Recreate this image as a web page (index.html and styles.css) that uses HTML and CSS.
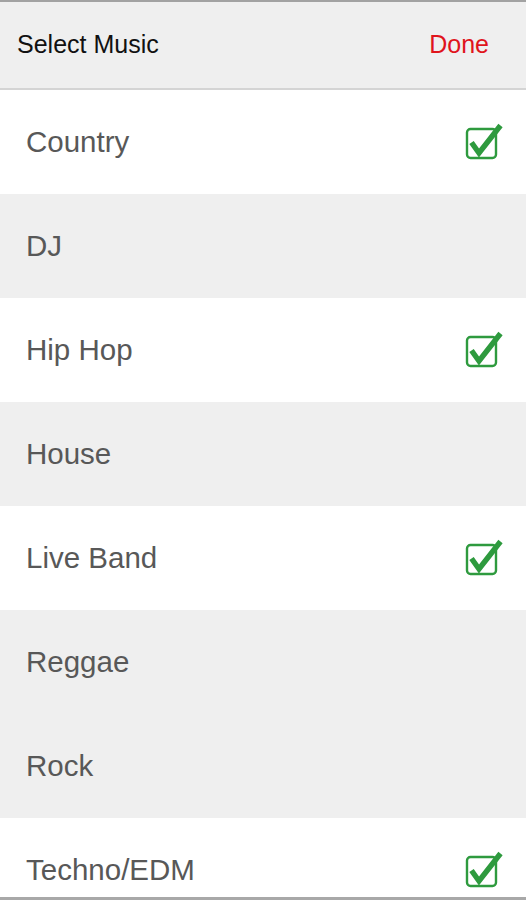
FILE: index.html
```html
<!DOCTYPE html>
<html>
<head>
<meta charset="utf-8">
<link rel="stylesheet" href="styles.css">
</head>
<body>
<div class="screen">
  <header class="bar">
    <span class="title">Select Music</span>
    <span class="done">Done</span>
  </header>
  <ul class="list">
    <li class="row on"><span>Country</span><svg class="check" viewBox="0 0 40 40" width="40" height="40"><rect x="3" y="7" width="29" height="29" rx="3.5" fill="none" stroke="#2e9a3e" stroke-width="2.4"/><path d="M7.5 20.5 L15 31 L36.5 3.5" fill="none" stroke="#2e9a3e" stroke-width="5.4" stroke-linejoin="miter" stroke-linecap="butt"/></svg></li>
    <li class="row"><span>DJ</span></li>
    <li class="row on"><span>Hip Hop</span><svg class="check" viewBox="0 0 40 40" width="40" height="40"><rect x="3" y="7" width="29" height="29" rx="3.5" fill="none" stroke="#2e9a3e" stroke-width="2.4"/><path d="M7.5 20.5 L15 31 L36.5 3.5" fill="none" stroke="#2e9a3e" stroke-width="5.4" stroke-linejoin="miter" stroke-linecap="butt"/></svg></li>
    <li class="row"><span>House</span></li>
    <li class="row on"><span>Live Band</span><svg class="check" viewBox="0 0 40 40" width="40" height="40"><rect x="3" y="7" width="29" height="29" rx="3.5" fill="none" stroke="#2e9a3e" stroke-width="2.4"/><path d="M7.5 20.5 L15 31 L36.5 3.5" fill="none" stroke="#2e9a3e" stroke-width="5.4" stroke-linejoin="miter" stroke-linecap="butt"/></svg></li>
    <li class="row"><span>Reggae</span></li>
    <li class="row"><span>Rock</span></li>
    <li class="row on"><span>Techno/EDM</span><svg class="check" viewBox="0 0 40 40" width="40" height="40"><rect x="3" y="7" width="29" height="29" rx="3.5" fill="none" stroke="#2e9a3e" stroke-width="2.4"/><path d="M7.5 20.5 L15 31 L36.5 3.5" fill="none" stroke="#2e9a3e" stroke-width="5.4" stroke-linejoin="miter" stroke-linecap="butt"/></svg></li>
  </ul>
</div>
</body>
</html>
```

FILE: styles.css
```css
* { box-sizing: border-box; }
html, body { margin: 0; padding: 0; }
body {
  font-family: "Liberation Sans", Arial, sans-serif;
  background: #ffffff;
}
.screen {
  width: 526px;
  height: 900px;
  border-top: 2px solid #a2a2a2;
  border-bottom: 3px solid #a8a8a8;
  display: flex;
  flex-direction: column;
  overflow: hidden;
}
.bar {
  flex: 0 0 88px;
  background: #efefef;
  border-bottom: 2px solid #d4d4d4;
  display: flex;
  align-items: center;
  justify-content: space-between;
  padding: 0 37px 1px 17px;
  font-size: 25px;
}
.title { color: #111111; }
.done { color: #e0141c; }
.list {
  list-style: none;
  margin: 0;
  padding: 0;
  flex: 1;
  overflow: hidden;
}
.row {
  height: 104px;
  display: flex;
  align-items: center;
  justify-content: space-between;
  padding: 0 22px 0 26px;
  background: #efefef;
  color: #585858;
  font-size: 29.5px;
}
.row.on { background: #ffffff; }
.check { display: block; }
```
